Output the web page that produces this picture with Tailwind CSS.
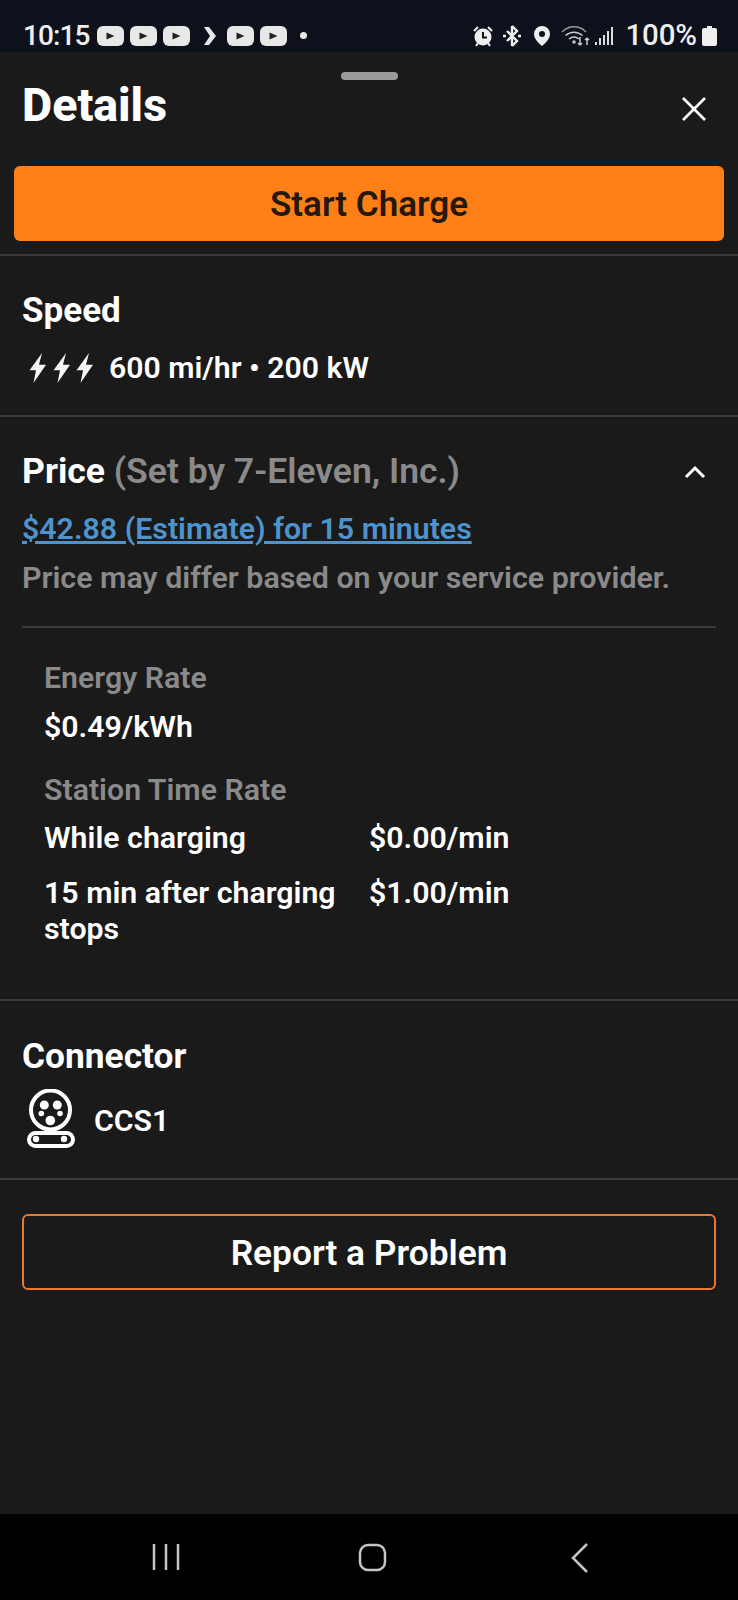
<!DOCTYPE html>
<html><head><meta charset="utf-8"><script src="https://cdn.jsdelivr.net/npm/@tailwindcss/browser@4"></script></head>
<body class="bg-[#1a1a1a]">
<div class="w-[738px] h-[1600px] flex flex-col bg-[#1a1a1a] text-white font-['Roboto',sans-serif] overflow-hidden">
  <!-- status bar -->
  <div class="h-[52px] shrink-0 bg-[#0c111b] flex items-center justify-between pl-[23px] pr-[21px] pt-[19px] text-[#eeeeee]">
    <div class="flex items-center">
      <span class="text-[28px] leading-none font-medium tracking-[-0.9px] w-[74px]">10:15</span>
      <div class="flex gap-[6px]">
        <svg width="27" height="20" viewBox="0 0 27 20"><rect width="27" height="20" rx="6" fill="#e8e8e8"/><path d="M9.500 6.500l8 3.500-8 3.500z" fill="#222"/></svg>
        <svg width="27" height="20" viewBox="0 0 27 20"><rect width="27" height="20" rx="6" fill="#e8e8e8"/><path d="M9.500 6.500l8 3.500-8 3.500z" fill="#222"/></svg>
        <svg width="27" height="20" viewBox="0 0 27 20"><rect width="27" height="20" rx="6" fill="#e8e8e8"/><path d="M9.500 6.500l8 3.500-8 3.500z" fill="#222"/></svg>
      </div>
      <svg class="ml-[13px]" width="14" height="20" viewBox="0 0 14 20"><path d="M1 1h5l7 9-7 9H1l6-9z" fill="#e8e8e8"/></svg>
      <div class="flex gap-[6px] ml-[10px]">
        <svg width="27" height="20" viewBox="0 0 27 20"><rect width="27" height="20" rx="6" fill="#e8e8e8"/><path d="M9.500 6.500l8 3.500-8 3.500z" fill="#222"/></svg>
        <svg width="27" height="20" viewBox="0 0 27 20"><rect width="27" height="20" rx="6" fill="#e8e8e8"/><path d="M9.500 6.500l8 3.500-8 3.500z" fill="#222"/></svg>
      </div>
      <span class="ml-[13px] w-[7px] h-[7px] rounded-full bg-[#e8e8e8]"></span>
    </div>
    <div class="flex items-center">
      <svg width="22" height="22" viewBox="0 0 22 22" fill="none"><circle cx="11" cy="12" r="8.5" fill="#eee"/><path d="M11 7v5.500h4" stroke="#111" stroke-width="2"/><path d="M2 6l4-4M20 6l-4-4" stroke="#eee" stroke-width="2"/><path d="M4 21l2-3M18 21l-2-3" stroke="#eee" stroke-width="2"/></svg>
      <svg class="ml-[8px]" width="20" height="22" viewBox="0 0 20 22" fill="none" stroke="#eee" stroke-width="2.400"><path d="M10 1v20M10 1l5 5-10 10M10 21l5-5L5 6"/><path d="M1 11h3M16 11h3"/></svg>
      <svg class="ml-[11px]" width="18" height="22" viewBox="0 0 18 22"><path fill-rule="evenodd" d="M9 1a8 8 0 0 1 8 8c0 5-5 9.500-8 12-3-2.500-8-7-8-12a8 8 0 0 1 8-8zm0 5a3 3 0 1 0 0 6 3 3 0 0 0 0-6z" fill="#eee"/></svg>
      <svg class="ml-[10px]" width="29" height="22" viewBox="0 0 29 22" fill="none" stroke="#ccc" stroke-width="1.500"><path d="M1 7c7-7 17-7 24 0" stroke="#999"/><path d="M4.500 10.500c5-4.500 12-4.500 17 0"/><path d="M8 14c3-2.500 7-2.500 10 0"/><circle cx="13" cy="17" r="1" fill="#ccc"/><path d="M19 12v8M19 20l-2-2M19 20l2-2M26 20v-7M26 13l-2 2M26 13l2 2"/></svg>
      <svg class="ml-[5px]" width="20" height="22" viewBox="0 0 20 22" fill="#ddd"><rect x="0" y="17" width="2" height="3"/><rect x="4" y="13" width="2" height="7"/><rect x="8" y="10" width="2" height="10"/><rect x="12" y="6" width="2" height="14"/><rect x="16" y="2" width="2" height="18"/></svg>
      <span class="ml-[10px] text-[29.5px] leading-none font-medium tracking-[-0.1px]">100%</span>
      <svg class="ml-[5px]" width="15" height="22" viewBox="0 0 15 22"><path d="M5 1h5v2h3a2 2 0 0 1 2 2v14a2 2 0 0 1-2 2H2a2 2 0 0 1-2-2V5a2 2 0 0 1 2-2h3z" fill="#eee"/></svg>
    </div>
  </div>

  <!-- sheet -->
  <div class="flex-1 flex flex-col min-h-0">
    <div class="relative h-[114px] shrink-0 flex items-center justify-between pl-[22px] pr-[31px]">
      <div class="absolute top-[20px] left-[341px] w-[57px] h-[8px] rounded-full bg-[#9a9a9a]"></div>
      <h1 class="text-[46.5px] leading-none font-extrabold pb-[8px]">Details</h1>
      <svg width="26" height="26" viewBox="0 0 26 26" fill="none" stroke="#fff" stroke-width="2.600"><path d="M2 2l22 22M24 2L2 24"/></svg>
    </div>
    <div class="px-[14px]">
      <div class="h-[75px] pt-[3px] rounded-[6px] bg-[#ff7f17] flex items-center justify-center text-[#24180f] text-[35px] font-semibold">Start Charge</div>
    </div>
    <div class="mt-[13px] h-[2px] bg-[#3a3a3a]"></div>

    <section class="h-[161px] shrink-0 px-[22px] pt-[37px] border-b-2 border-[#3a3a3a]">
      <h2 class="text-[35px] leading-[36px] font-bold">Speed</h2>
      <div class="mt-[21px] flex items-center h-[36px]">
        <div class="ml-[5px] flex gap-[1.500px]">
          <svg width="22" height="30" viewBox="0 0 22 28" preserveAspectRatio="none"><path d="M15 0L2.500 16H9l-2.500 12L19 11h-7z" fill="#f5f5f5"/></svg>
          <svg width="22" height="30" viewBox="0 0 22 28" preserveAspectRatio="none"><path d="M15 0L2.500 16H9l-2.500 12L19 11h-7z" fill="#f5f5f5"/></svg>
          <svg width="22" height="30" viewBox="0 0 22 28" preserveAspectRatio="none"><path d="M15 0L2.500 16H9l-2.500 12L19 11h-7z" fill="#f5f5f5"/></svg>
        </div>
        <span class="ml-[13px] text-[30.2px] font-semibold">600 mi/hr • 200 kW</span>
      </div>
    </section>

    <section class="h-[584px] shrink-0 border-b-2 border-[#3a3a3a] px-[22px] pt-[37px]">
      <div class="flex items-center justify-between h-[36px]">
        <h2 class="text-[35.5px] font-bold">Price <span class="font-semibold text-[#8a8a8a]">(Set by 7-Eleven, Inc.)</span></h2>
        <svg class="mr-[10px]" width="22" height="14" viewBox="0 0 22 14" fill="none" stroke="#fff" stroke-width="3"><path d="M2 12l9-9 9 9"/></svg>
      </div>
      <a class="block mt-[21px] text-[30.3px] leading-[36px] font-semibold text-[#4f93cc] underline">$42.88 (Estimate) for 15 minutes</a>
      <p class="mt-[13px] text-[30.4px] leading-[36px] font-semibold text-[#8a8a8a]">Price may differ based on your service provider.</p>
      <div class="mt-[30px] h-[2px] bg-[#3a3a3a]"></div>
      <div class="pl-[22px]">
        <div class="mt-[32px] text-[30.3px] leading-[36px] font-semibold text-[#8a8a8a]">Energy Rate</div>
        <div class="mt-[13px] text-[30.3px] leading-[36px] font-semibold">$0.49/kWh</div>
        <div class="mt-[27px] text-[30.3px] leading-[36px] font-semibold text-[#8a8a8a]">Station Time Rate</div>
        <div class="mt-[12px] grid grid-cols-[325px_1fr] gap-y-[19px] text-[30.3px] leading-[36px] font-semibold">
          <div>While charging</div><div>$0.00/min</div>
          <div>15 min after charging stops</div><div>$1.00/min</div>
        </div>
      </div>
    </section>

    <section class="h-[179px] shrink-0 border-b-2 border-[#3a3a3a] px-[22px] pt-[37px]">
      <h2 class="text-[35.3px] leading-[36px] font-bold">Connector</h2>
      <div class="mt-[15px] flex items-center">
        <svg class="ml-[4px]" width="50" height="60" viewBox="0 0 50 60" fill="none">
          <circle cx="24.500" cy="21" r="19.500" stroke="#fff" stroke-width="4"/>
          <circle cx="18.300" cy="16" r="4.500" fill="#fff"/><circle cx="31.300" cy="16" r="4.500" fill="#fff"/>
          <circle cx="15.300" cy="24.500" r="2.800" fill="#fff"/><circle cx="34" cy="24.500" r="2.800" fill="#fff"/>
          <circle cx="24.300" cy="31.500" r="4.800" fill="#fff"/>
          <rect x="3" y="44" width="44" height="13" rx="6.500" fill="#1a1a1a" stroke="#fff" stroke-width="4"/>
          <circle cx="10" cy="50" r="3.200" fill="#fff"/><circle cx="38" cy="50" r="3.200" fill="#fff"/>
        </svg>
        <span class="ml-[18px] pt-[3px] text-[30.3px] font-semibold">CCS1</span>
      </div>
    </section>

    <div class="px-[22px] pt-[34px]">
      <div class="h-[76px] pt-[2px] rounded-[6px] border-2 border-[#e8792f] flex items-center justify-center text-[35.3px] font-semibold">Report a Problem</div>
    </div>
  </div>

  <!-- nav bar -->
  <div class="relative h-[86px] shrink-0 bg-black">
    <svg class="absolute left-[152px] top-[29px]" width="28" height="30" viewBox="0 0 28 30" stroke="#c4c4c4" stroke-width="2.500"><path d="M2 1v26M14 1v26M26 1v26"/></svg>
    <svg class="absolute left-[358px] top-[29px]" width="30" height="30" viewBox="0 0 30 30" fill="none" stroke="#c4c4c4" stroke-width="2.500"><rect x="2" y="2" width="25" height="25" rx="8"/></svg>
    <svg class="absolute left-[570px] top-[28px]" width="20" height="32" viewBox="0 0 20 32" fill="none" stroke="#c4c4c4" stroke-width="2.500"><path d="M17 2L3 16l14 14"/></svg>
  </div>
</div>
</body></html>
